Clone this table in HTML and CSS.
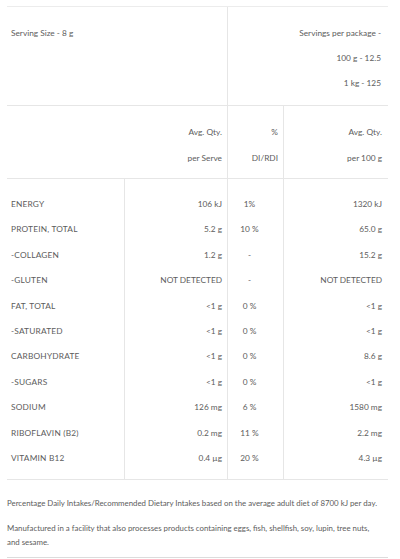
FILE: index.html
```html
<!DOCTYPE html>
<html>
<head>
<meta charset="utf-8">
<link rel="stylesheet" href="styles.css">
</head>
<body>
<div class="panel">
  <div class="serving">
    <div class="serving-left">
      <div class="line">Serving Size - 8 g</div>
    </div>
    <div class="serving-right">
      <div class="line">Servings per package -</div>
      <div class="line">100 g - 12.5</div>
      <div class="line">1 kg - 125</div>
    </div>
  </div>
  <div class="head">
    <div class="hcell c-serve"><div class="hline">Avg. Qty.</div><div class="hline">per Serve</div></div>
    <div class="hcell c-pct"><div class="hline">%</div><div class="hline">DI/RDI</div></div>
    <div class="hcell c-100"><div class="hline">Avg. Qty.</div><div class="hline">per 100 g</div></div>
  </div>
  <div class="nut">
    <div class="row first"><div class="cell lab">ENERGY</div><div class="cell srv">106 kJ</div><div class="cell pct">1%</div><div class="cell hun">1320 kJ</div></div>
    <div class="row"><div class="cell lab">PROTEIN, TOTAL</div><div class="cell srv">5.2 g</div><div class="cell pct">10 %</div><div class="cell hun">65.0 g</div></div>
    <div class="row"><div class="cell lab">-COLLAGEN</div><div class="cell srv">1.2 g</div><div class="cell pct">-</div><div class="cell hun">15.2 g</div></div>
    <div class="row"><div class="cell lab">-GLUTEN</div><div class="cell srv">NOT DETECTED</div><div class="cell pct">-</div><div class="cell hun">NOT DETECTED</div></div>
    <div class="row"><div class="cell lab">FAT, TOTAL</div><div class="cell srv">&lt;1 g</div><div class="cell pct">0 %</div><div class="cell hun">&lt;1 g</div></div>
    <div class="row"><div class="cell lab">-SATURATED</div><div class="cell srv">&lt;1 g</div><div class="cell pct">0 %</div><div class="cell hun">&lt;1 g</div></div>
    <div class="row"><div class="cell lab">CARBOHYDRATE</div><div class="cell srv">&lt;1 g</div><div class="cell pct">0 %</div><div class="cell hun">8.6 g</div></div>
    <div class="row"><div class="cell lab">-SUGARS</div><div class="cell srv">&lt;1 g</div><div class="cell pct">0 %</div><div class="cell hun">&lt;1 g</div></div>
    <div class="row"><div class="cell lab">SODIUM</div><div class="cell srv">126 mg</div><div class="cell pct">6 %</div><div class="cell hun">1580 mg</div></div>
    <div class="row"><div class="cell lab">RIBOFLAVIN (B2)</div><div class="cell srv">0.2 mg</div><div class="cell pct">11 %</div><div class="cell hun">2.2 mg</div></div>
    <div class="row last"><div class="cell lab">VITAMIN B12</div><div class="cell srv">0.4 µg</div><div class="cell pct">20 %</div><div class="cell hun">4.3 µg</div></div>
  </div>
  <div class="notes">
    <p class="note">Percentage Daily Intakes/Recommended Dietary Intakes based on the average adult diet of 8700 kJ per day.</p>
    <p class="note second">Manufactured in a facility that also processes products containing eggs, fish, shellfish, soy, lupin, tree nuts, and sesame.</p>
  </div>
</div>
</body>
</html>
```
FILE: styles.css
```css
html, body {
  margin: 0;
  padding: 0;
  background: #ffffff;
}

body {
  font-family: Lato, "Open Sans", sans-serif;
  font-weight: 400;
  color: #5c5c5c;
  font-size: 8.3px;
}

.panel {
  margin: 6px 0 0 7px;
  width: 381px;
  border-top: 1px solid #ececec;
}

.serving {
  display: grid;
  grid-template-columns: 221px 160px;
  border-bottom: 1px solid #e6e6e6;
}

.serving-left {
  border-right: 1px solid #e6e6e6;
  padding: 14px 0 9px 4px;
}

.serving-right {
  padding: 14px 7px 9px 0;
  text-align: right;
}

.line {
  height: 25px;
  line-height: 25px;
  white-space: nowrap;
}

.head {
  display: grid;
  grid-template-columns: 221px 56px 104px;
  border-bottom: 1px solid #e6e6e6;
}

.hcell {
  padding: 13px 0 7px 0;
  text-align: right;
}

.c-serve {
  border-right: 1px solid #e6e6e6;
  padding-right: 5px;
}

.c-pct {
  border-right: 1px solid #e6e6e6;
  padding-right: 5px;
}

.c-100 {
  padding-right: 6px;
}

.hline {
  height: 26px;
  line-height: 26px;
  white-space: nowrap;
}

.nut {
  border-bottom: 1px solid #e6e6e6;
}

.row {
  display: grid;
  grid-template-columns: 118px 103px 56px 104px;
}

.cell {
  height: 25.4px;
  line-height: 25.4px;
  white-space: nowrap;
}

.row.first .cell {
  padding-top: 13px;
}

.row.last .cell {
  padding-bottom: 8px;
}

.lab {
  padding-left: 4px;
  border-right: 1px solid #e6e6e6;
  letter-spacing: 0.2px;
}

.srv {
  text-align: right;
  padding-right: 5px;
  border-right: 1px solid #e6e6e6;
}

.pct {
  text-align: center;
  padding-right: 12px;
  border-right: 1px solid #e6e6e6;
}

.hun {
  text-align: right;
  padding-right: 6px;
}

.notes {
  padding: 16px 6px 8px 0;
  border-bottom: 1px solid #dcdcdc;
}

.note {
  margin: 0;
  font-size: 7.85px;
  line-height: 14px;
}

.note.second {
  margin-top: 11px;
}
```
